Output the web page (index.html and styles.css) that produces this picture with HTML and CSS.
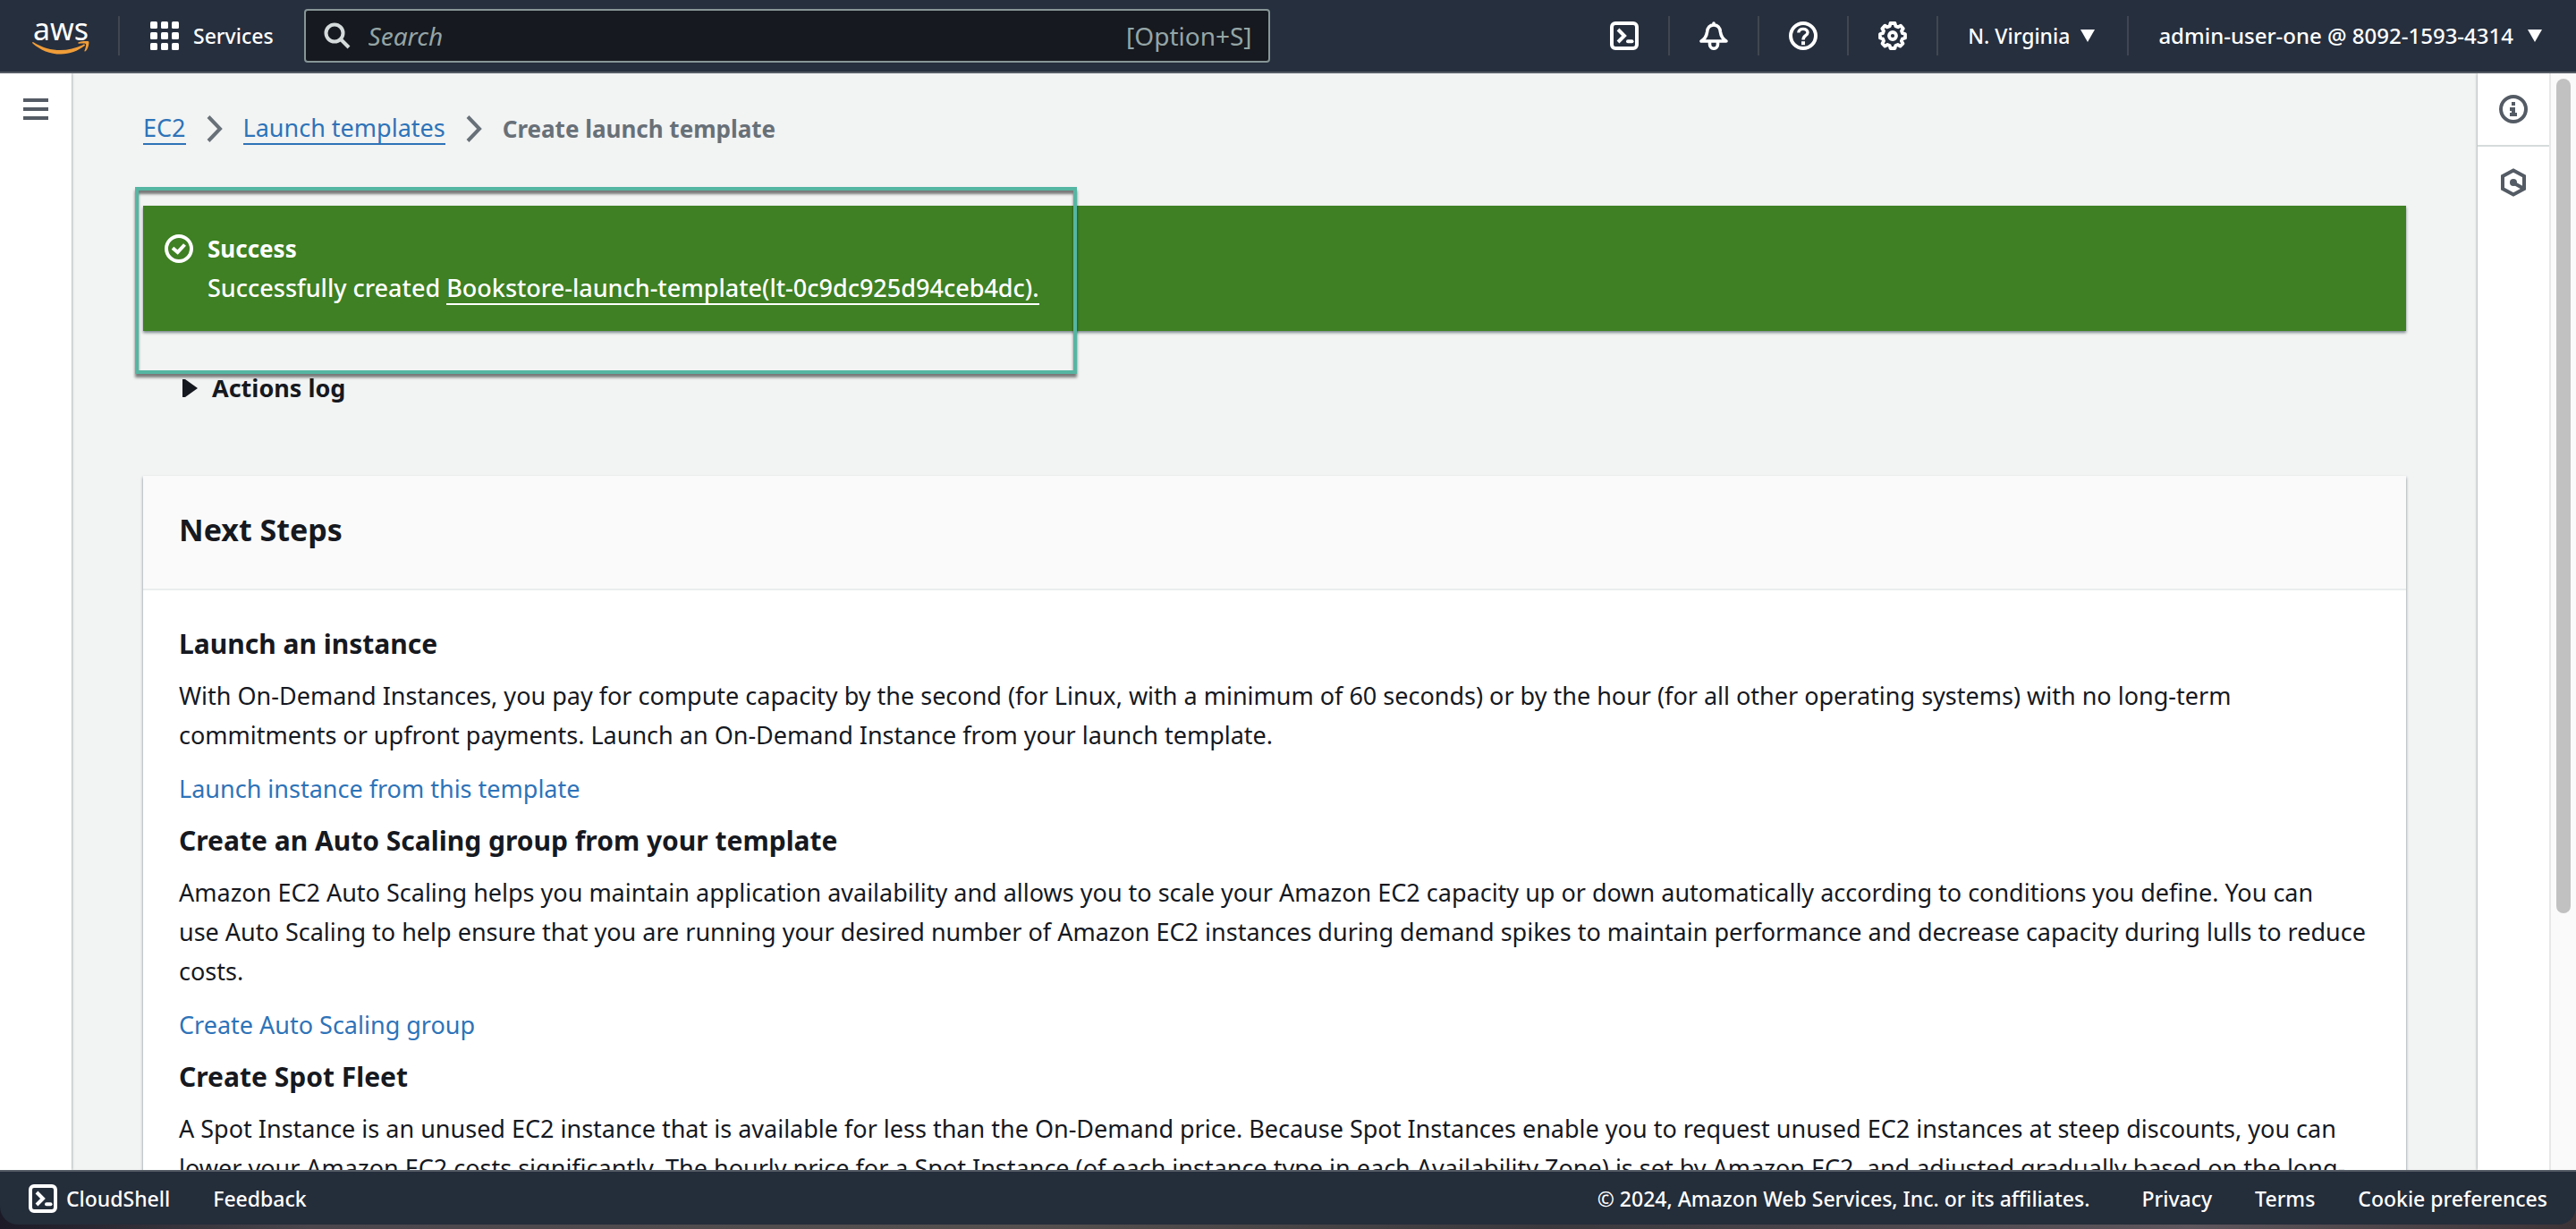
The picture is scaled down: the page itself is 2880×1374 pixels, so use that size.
FILE: index.html
```html
<!DOCTYPE html>
<html lang="en">
<head>
<meta charset="utf-8">
<title>Create launch template | EC2</title>
<link rel="stylesheet" href="styles.css">
</head>
<body>
<div class="app">
  <header class="topbar">
    <a class="logo" href="#" aria-label="AWS home">
      <span class="logo-word">aws</span>
      <svg class="logo-smile" width="64" height="16" viewBox="0 0 64 16" fill="#f09d38" aria-hidden="true">
        <path d="M1 1C20 13 40 12 56 4.500L57.500 3.600C59 3.200 59.600 4.400 58.400 5.300C51 11 42 14.500 32 14.500C20 14.500 9 10 .5 2.400C-.2 1.400.2.600 1 1Z"/>
        <path d="M51.500 1.600C54 0 62.300-.8 63.200.4C64 1.800 62.500 9 59.500 11.200C58.800 11.700 58.200 11.300 58.500 10.500C59.300 8.500 60.600 4.500 60 3.300C59.400 2.300 55 2.600 52.400 2.700C51.300 2.800 50.900 2.100 51.500 1.600Z"/>
      </svg>
    </a>
    <button class="nav-item services" type="button">
      <svg width="32" height="32" viewBox="0 0 32 32" fill="#fff" aria-hidden="true">
        <rect width="8" height="8" rx="1.500"/><rect x="12" width="8" height="8" rx="1.500"/><rect x="24" width="8" height="8" rx="1.500"/>
        <rect y="12" width="8" height="8" rx="1.500"/><rect x="12" y="12" width="8" height="8" rx="1.500"/><rect x="24" y="12" width="8" height="8" rx="1.500"/>
        <rect y="24" width="8" height="8" rx="1.500"/><rect x="12" y="24" width="8" height="8" rx="1.500"/><rect x="24" y="24" width="8" height="8" rx="1.500"/>
      </svg>
      Services
    </button>
    <div class="search">
      <svg width="30" height="30" viewBox="0 0 30 30" fill="none" stroke="#d5dbdb" stroke-width="4" aria-hidden="true"><circle cx="12" cy="12" r="9.500"/><path d="M18.500 18.500L28 28"/></svg>
      <input class="search-input" type="search" placeholder="Search" aria-label="Search">
      <span class="search-hint">[Option+S]</span>
    </div>
    <nav class="tools">
      <button class="nav-item tool" type="button" aria-label="CloudShell">
        <svg width="32" height="32" viewBox="0 0 32 32" fill="none" stroke="#fff" stroke-width="4" aria-hidden="true"><rect x="2" y="2" width="28" height="28" rx="4"/><path d="M9 9L16 16L9 23"/><path d="M20 22.300H24.500" stroke-linecap="round"/></svg>
      </button>
      <button class="nav-item tool" type="button" aria-label="Notifications">
        <svg width="32" height="32" viewBox="0 0 32 32" fill="none" stroke="#fff" stroke-width="3.600" stroke-linejoin="round" stroke-linecap="round" aria-hidden="true"><path d="M16 2V4M2 22H30C26 19.500 24 16 23.500 12C23 7 20.500 4 16 4C11.500 4 9 7 8.500 12C8 16 6 19.500 2 22Z"/><path d="M11.500 22.500V25.500C11.500 31.800 20.500 31.800 20.500 25.500V22.500"/></svg>
      </button>
      <button class="nav-item tool" type="button" aria-label="Help">
        <svg width="32" height="32" viewBox="0 0 32 32" fill="none" stroke="#fff" stroke-width="4" aria-hidden="true"><circle cx="16" cy="16" r="14"/><path d="M10.800 12.500C10.800 7 21 7 21 12.300C21 16 16 15.500 16 20.500" stroke-width="3.400"/><path d="M14 24.200H18"/></svg>
      </button>
      <button class="nav-item tool" type="button" aria-label="Settings">
        <svg width="32" height="32" viewBox="0 0 32 32" fill="none" stroke="#fff" stroke-width="3.800" stroke-linejoin="round" aria-hidden="true"><path d="M13.500 2H18.500L19.400 5.200L22 6.300L25 4.600L27.800 8L26 10.600L27 13.200L30 14V18.500L27 19.300L25.800 21.800L27.500 24.700L24.500 27.600L21.800 26L19.300 27L18.500 30H13.500L12.700 27L10.200 26L7.400 27.600L4.500 24.700L6 21.800L5 19.300L2 18.500V14L5 13.200L6 10.600L4.300 8L7.400 4.600L10 6.300L12.700 5.200Z"/><circle cx="16" cy="16" r="4"/></svg>
      </button>
      <button class="nav-item region" type="button">N. Virginia <svg width="16" height="14" viewBox="0 0 16 14" fill="#fff" aria-hidden="true"><path d="M0 0H16L8 14Z"/></svg></button>
      <button class="nav-item account" type="button">admin-user-one @ 8092-1593-4314 <svg width="16" height="14" viewBox="0 0 16 14" fill="#fff" aria-hidden="true"><path d="M0 0H16L8 14Z"/></svg></button>
    </nav>
  </header>

  <div class="workspace">
    <aside class="rail rail-left">
      <button class="rail-button" type="button" aria-label="Open navigation">
        <svg width="28" height="24" viewBox="0 0 28 24" fill="#545b64" aria-hidden="true"><rect width="28" height="4"/><rect y="10" width="28" height="4"/><rect y="20" width="28" height="4"/></svg>
      </button>
    </aside>

    <main class="content">
      <nav class="breadcrumbs" aria-label="Breadcrumbs">
        <a href="#">EC2</a>
        <svg width="18" height="30" viewBox="0 0 18 30" fill="none" stroke="#687078" stroke-width="4" aria-hidden="true"><path d="M2 1.500L15 15L2 28.500"/></svg>
        <a href="#">Launch templates</a>
        <svg width="18" height="30" viewBox="0 0 18 30" fill="none" stroke="#687078" stroke-width="4" aria-hidden="true"><path d="M2 1.500L15 15L2 28.500"/></svg>
        <span class="crumb-current">Create launch template</span>
      </nav>

      <section class="notice">
        <div class="flash" role="status">
          <svg class="flash-icon" width="32" height="32" viewBox="0 0 32 32" fill="none" stroke="#fff" stroke-width="4" aria-hidden="true"><circle cx="16" cy="16" r="14"/><path d="M9 15.200L14.600 20L22.500 11.500"/></svg>
          <div>
            <strong>Success</strong>
            <p class="flash-text">Successfully created <a href="#">Bookstore-launch-template(lt-0c9dc925d94ceb4dc).</a></p>
          </div>
        </div>
        <button class="actions-log" type="button" aria-expanded="false">
          <svg width="17" height="20" viewBox="0 0 17 20" fill="#16191f" aria-hidden="true"><path d="M0 0H3L17 10L3 20H0Z"/></svg>
          Actions log
        </button>
        <div class="highlight"></div>
      </section>

      <section class="card">
        <div class="card-header"><h1>Next Steps</h1></div>
        <div class="card-body">
          <article class="step">
            <h2>Launch an instance</h2>
            <p>With On-Demand Instances, you pay for compute capacity by the second (for Linux, with a minimum of 60 seconds) or by the hour (for all other operating systems) with no long-term commitments or upfront payments. Launch an On-Demand Instance from your launch template.</p>
            <a href="#">Launch instance from this template</a>
          </article>
          <article class="step">
            <h2>Create an Auto Scaling group from your template</h2>
            <p>Amazon EC2 Auto Scaling helps you maintain application availability and allows you to scale your Amazon EC2 capacity up or down automatically according to conditions you define. You can<br>use Auto Scaling to help ensure that you are running your desired number of Amazon EC2 instances during demand spikes to maintain performance and decrease capacity during lulls to reduce costs.</p>
            <a href="#">Create Auto Scaling group</a>
          </article>
          <article class="step">
            <h2>Create Spot Fleet</h2>
            <p>A Spot Instance is an unused EC2 instance that is available for less than the On-Demand price. Because Spot Instances enable you to request unused EC2 instances at steep discounts, you can lower your Amazon EC2 costs significantly. The hourly price for a Spot Instance (of each instance type in each Availability Zone) is set by Amazon EC2, and adjusted gradually based on the long-</p>
          </article>
        </div>
      </section>
    </main>

    <aside class="rail rail-right">
      <button class="rail-button" type="button" aria-label="Info">
        <svg width="32" height="32" viewBox="0 0 32 32" fill="none" stroke="#545b64" stroke-width="4" aria-hidden="true"><circle cx="16" cy="16" r="14"/><path d="M14 10H18M12 16H18M12 22H20M16 14V23"/></svg>
      </button>
      <button class="rail-button" type="button" aria-label="Tutorials">
        <svg width="32" height="32" viewBox="0 0 32 32" fill="none" stroke="#545b64" stroke-width="4" aria-hidden="true"><path d="M16 2.500L28 9V23L16 29.500L4 23V9Z"/><path d="M17 17L27 22.500"/><circle cx="16" cy="16" r="4" fill="#545b64" stroke="none"/></svg>
      </button>
    </aside>
    <div class="scroll-track"><div class="scroll-thumb"></div></div>
  </div>

  <footer class="bottombar">
    <button class="cloudshell" type="button">
      <svg width="32" height="32" viewBox="0 0 32 32" fill="none" stroke="#fff" stroke-width="4" aria-hidden="true"><rect x="2" y="2" width="28" height="28" rx="4"/><path d="M9 9L16 16L9 23"/><path d="M20 22.300H24.500" stroke-linecap="round"/></svg>
      CloudShell
    </button>
    <a class="feedback" href="#">Feedback</a>
    <span class="copyright">© 2024, Amazon Web Services, Inc. or its affiliates.</span>
    <a href="#">Privacy</a>
    <a href="#">Terms</a>
    <a href="#">Cookie preferences</a>
  </footer>
</div>
</body>
</html>
```
FILE: styles.css
```css
* { box-sizing: border-box; }

body {
  margin: 0;
  background: linear-gradient(90deg, #1b1a26, #4a464c 12%, #55504f 40%, #3a383d 60%, #5d565c 85%, #3b3336);
  color: #16191f;
  font: 27px/44px "Noto Sans", "Open Sans", sans-serif;
}

h1, h2, p { margin: 0; }
svg { display: block; flex: none; }
a { color: #2e73b8; text-decoration: none; }
button { margin: 0; padding: 0; border: 0; background: none; color: inherit; font: inherit; cursor: pointer; }

.app { display: flex; flex-direction: column; height: 100vh; padding-bottom: 5px; }

/* Top navigation */
.topbar {
  display: flex;
  flex: none;
  align-items: center;
  height: 82px;
  border-bottom: 2px solid #545b64;
  background: #262f3e;
  color: #fff;
}
.logo { display: flex; flex-direction: column; align-items: center; width: 134px; height: 44px; padding-left: 4px; border-right: 2px solid #414750; color: #fff; }
.logo-word { font-size: 34px; line-height: 28px; }
.nav-item { display: flex; align-items: center; gap: 12px; font-size: 23px; font-weight: 500; white-space: nowrap; }
.services { gap: 16px; padding: 0 34px; }
.search { display: flex; flex: 0 1 1080px; align-items: center; gap: 20px; height: 60px; padding: 0 18px 0 20px; border: 2px solid #879596; border-radius: 4px; background: #16191f; }
.search-input { flex: 1; min-width: 0; padding: 0; border: 0; outline: 0; background: none; color: #fff; font: 28px/44px "Noto Sans", sans-serif; }
.search-input::placeholder { color: #95a5a6; font-style: italic; opacity: 1; }
.search-hint { color: #95a5a6; font-size: 28px; }
.tools { display: flex; align-items: center; margin-left: auto; }
.tools .nav-item { height: 44px; padding: 0 33px; border-left: 2px solid #414750; }
.tools .tool:first-child { border-left: 0; }
.tools .region { padding-right: 36px; }
.tools .account { gap: 16px; padding-right: 38px; font-size: 24px; }

/* Workspace */
.workspace { display: flex; flex: 1; min-height: 0; overflow: hidden; background: #f2f3f3; }
.rail { z-index: 1; flex: none; width: 80px; background: #fff; box-shadow: 0 0 3px rgba(0, 28, 36, .5); }
.rail-button { display: flex; align-items: center; justify-content: center; width: 100%; height: 80px; }
.rail-right .rail-button:first-child { height: 82px; border-bottom: 2px solid #d5dbdb; }
.scroll-track { z-index: 2; flex: none; width: 30px; padding: 6px 6px 0; border-left: 2px solid #e8e8e8; background: #fafafa; }
.scroll-thumb { width: 16px; height: 76.5%; border-radius: 8px; background: #c1c1c1; }

.content { flex: 1; min-width: 0; padding: 40px 80px 0; }
.breadcrumbs { display: flex; align-items: center; gap: 23px; height: 44px; margin-bottom: 64px; }
.breadcrumbs a { border-bottom: 2px solid; line-height: 34px; }
.crumb-current { color: #687078; font-size: 26px; font-weight: 700; }

.notice { position: relative; height: 302px; }
.flash { display: flex; gap: 16px; height: 140px; padding: 26px 24px; background: #3e8023; box-shadow: 0 2px 3px rgba(0, 28, 36, .5); color: #fff; }
.flash-icon { margin-top: 6px; }
.flash strong { display: block; font-size: 26px; }
.flash-text { font-weight: 500; }
.flash-text a { display: inline-block; border-bottom: 2px solid; color: #fff; line-height: 34px; }
.highlight { position: absolute; top: -21px; left: -9px; width: 1053px; height: 209px; border: 4px solid #55b6a2; box-shadow: 0 4px 3px rgba(0, 0, 0, .5), inset 0 4px 3px rgba(0, 0, 0, .5); pointer-events: none; }
.actions-log { display: flex; align-items: center; gap: 16px; margin: 42px 0 0 44px; font-weight: 700; }

.card { background: #fff; box-shadow: 0 2px 3px rgba(0, 28, 36, .5); }
.card-header { padding: 38px 40px 44px; border-bottom: 2px solid #eaeded; background: #fafafa; }
.card-header h1 { font-size: 34px; line-height: 44px; }
.card-body { display: grid; gap: 14px; padding: 38px 40px; }
.step h2 { margin-bottom: 14px; font-size: 30px; line-height: 44px; }
.step p { margin-bottom: 16px; }
.step a { display: block; width: fit-content; }

/* Footer */
.bottombar {
  display: flex;
  flex: none;
  z-index: 3;
  align-items: center;
  gap: 48px;
  height: 61px;
  padding: 0 32px;
  border-top: 2px solid #545b64;
  border-radius: 0 0 20px 20px;
  background: #242d3a;
  color: #fff;
  font-size: 23px;
  font-weight: 500;
}
.bottombar a { color: #fff; }
.cloudshell { display: flex; align-items: center; gap: 10px; }
.copyright { margin: 0 10px 0 auto; }
```
